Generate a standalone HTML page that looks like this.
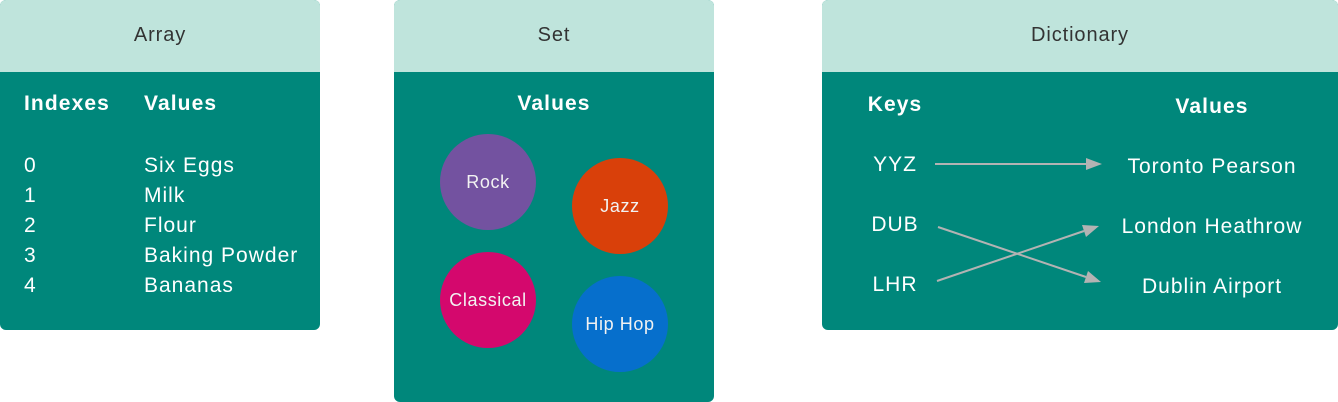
<!DOCTYPE html>
<html><head><meta charset="utf-8"><style>
*{margin:0;padding:0;box-sizing:border-box}
body{width:1338px;height:402px;background:#fff;position:relative;overflow:hidden;font-family:"Liberation Sans",sans-serif}
.p{position:absolute;background:#00877b;border-radius:6px;overflow:hidden}
.h{position:absolute;left:0;right:0;top:0;height:72px;background:#bfe4dc;color:#333;font-size:20px;letter-spacing:0.9px;text-align:center;line-height:70px}
.t{position:absolute;color:#fff;font-size:21px;letter-spacing:1px;line-height:24px;white-space:nowrap}
.b{font-weight:bold;letter-spacing:1.1px}
.c{transform:translateX(-50%)}
.ci{position:absolute;width:96px;height:96px;border-radius:50%;color:#f2f2f2;font-size:18px;letter-spacing:0.6px;display:flex;align-items:center;justify-content:center}
</style></head><body>
<div class="p" style="left:0;top:0;width:320px;height:330px">
<div class="h">Array</div>
<div class="t b" style="left:24px;top:92px">Indexes</div>
<div class="t b" style="left:144px;top:92px">Values</div>
<div class="t" style="left:24px;top:151px;line-height:30px">0<br>1<br>2<br>3<br>4</div>
<div class="t" style="left:144px;top:151px;line-height:30px">Six Eggs<br>Milk<br>Flour<br>Baking Powder<br>Bananas</div>
</div>
<div class="p" style="left:394px;top:0;width:320px;height:402px">
<div class="h">Set</div>
<div class="t b c" style="left:160px;top:92px">Values</div>
<div class="ci" style="left:46px;top:134px;background:#7352a0">Rock</div>
<div class="ci" style="left:178px;top:158px;background:#d9400a">Jazz</div>
<div class="ci" style="left:46px;top:252px;background:#d4086d">Classical</div>
<div class="ci" style="left:178px;top:276px;background:#066fcc">Hip Hop</div>
</div>
<div class="p" style="left:822px;top:0;width:516px;height:330px">
<div class="h">Dictionary</div>
<div class="t b c" style="left:73px;top:93px">Keys</div>
<div class="t b c" style="left:390px;top:95px">Values</div>
<div class="t c" style="left:73px;top:153px">YYZ</div>
<div class="t c" style="left:73px;top:213px">DUB</div>
<div class="t c" style="left:73px;top:273px">LHR</div>
<div class="t c" style="left:390px;top:155px">Toronto Pearson</div>
<div class="t c" style="left:390px;top:215px">London Heathrow</div>
<div class="t c" style="left:390px;top:275px">Dublin Airport</div>
<svg style="position:absolute;left:0;top:0" width="516" height="330">
<g stroke="#b3b3b3" stroke-width="2" fill="#b3b3b3">
<line x1="113" y1="164" x2="264" y2="164"/>
<polygon points="280,164 264,158 264,170" stroke="none"/>
<line x1="116" y1="227" x2="264" y2="277"/>
<polygon points="279,282 266,271 262,283" stroke="none"/>
<line x1="115" y1="281" x2="262" y2="231"/>
<polygon points="277,226 260,225 264,237" stroke="none"/>
</g></svg>
</div>
</body></html>
